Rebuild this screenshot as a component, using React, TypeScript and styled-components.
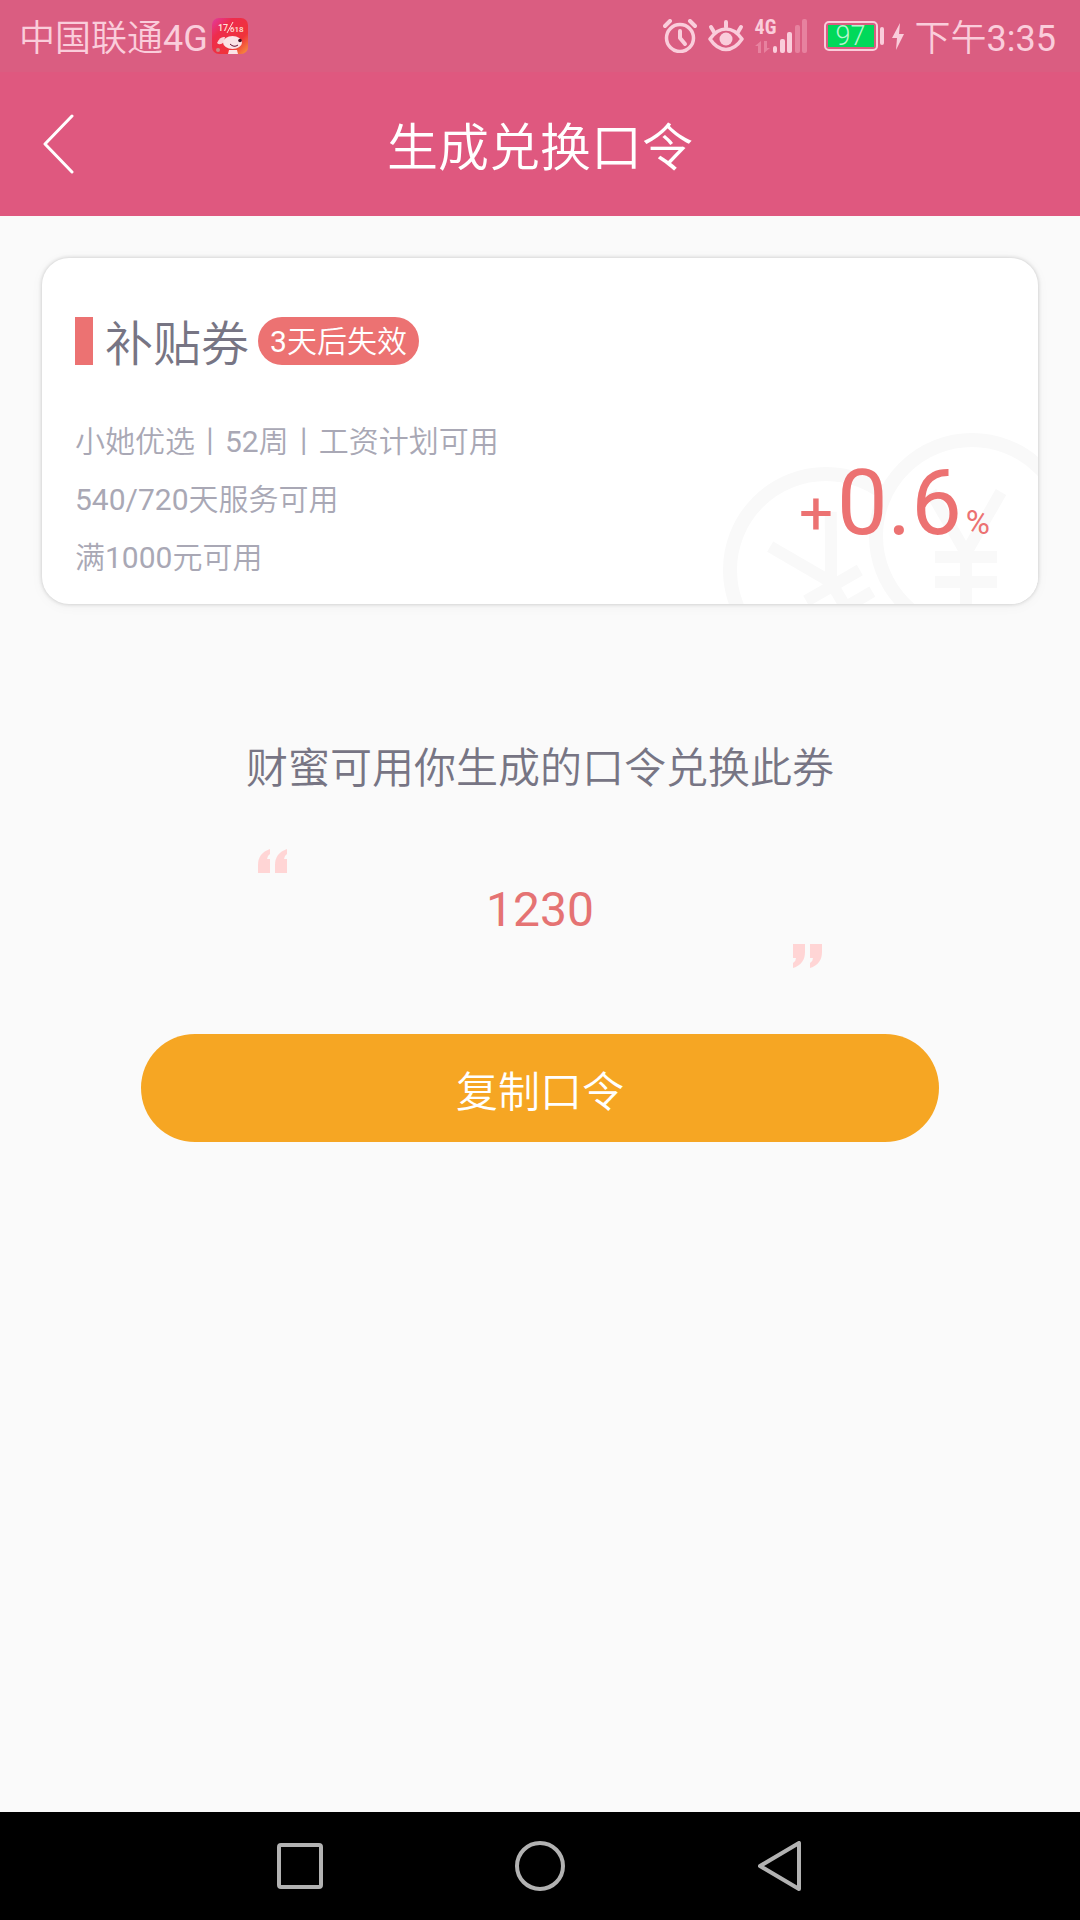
import React from "react";
import styled, { createGlobalStyle } from "styled-components";

const color = {
  statusBar: "#da5d81",
  header: "#df587f",
  statusInk: "#facddb",
  statusDim: "#e7829f",
  coral: "#ec7272",
  title: "#777584",
  detail: "#a9a8b5",
  page: "#fafafa",
  amber: "#f6a623",
  nav: "#b2b2b2",
};

const GlobalStyle = createGlobalStyle`
  *, *::before, *::after { box-sizing: border-box; }
  body {
    margin: 0;
    background: ${color.page};
    font-family: Roboto, "Noto Sans CJK SC", sans-serif;
    font-weight: 350;
  }
  button { font: inherit; border: 0; padding: 0; background: none; cursor: pointer; }
  h1, h2, p, ul { margin: 0; padding: 0; font-weight: inherit; }
  svg { display: block; }
`;

const Screen = styled.div`
  display: flex;
  flex-direction: column;
  min-height: 100vh;
`;

const Latin = styled.span`
  font-weight: 400;
`;

const StatusBar = styled.div`
  display: flex;
  align-items: center;
  justify-content: space-between;
  height: 72px;
  padding: 0 24px 0 19px;
  background: ${color.statusBar};
  color: ${color.statusInk};
  font-size: 36px;
  line-height: 48px;
`;

const StatusGroup = styled.div<{ $gap: number }>`
  display: flex;
  align-items: center;
  gap: ${(p) => p.$gap}px;
`;

const StatusText = styled.span`
  padding-top: 6px;
  white-space: nowrap;
`;

const Signal = styled.div`
  display: grid;
  grid-template-columns: 18px 34px;
  height: 34px;
`;

const SignalKind = styled.div`
  display: flex;
  flex-direction: column;
  justify-content: space-between;
  font: 700 20px/16px "Liberation Sans Narrow", "Roboto Condensed", Roboto, sans-serif;
`;

const Power = styled.div`
  display: flex;
  align-items: center;
  gap: 8px;
  margin-left: 6px;
`;

const Battery = styled.div`
  display: flex;
  align-items: center;
  gap: 2px;
`;

const BatteryCase = styled.div`
  width: 54px;
  height: 30px;
  padding: 2px;
  border: 2px solid ${color.statusInk};
  border-radius: 5px;
`;

const BatteryLevel = styled.div`
  height: 100%;
  background: #00d95a;
  color: #b9f5cf;
  font-size: 27px;
  line-height: 22px;
  text-align: center;
`;

const BatteryTip = styled.div`
  width: 4px;
  height: 18px;
  border-radius: 2px;
  background: ${color.statusInk};
`;

const Header = styled.header`
  display: grid;
  grid-template-columns: 118px 1fr 118px;
  align-items: center;
  height: 144px;
  background: ${color.header};
  color: #fff;
`;

const BackButton = styled.button`
  display: flex;
  align-items: center;
  height: 100%;
  padding-left: 42px;
`;

const HeaderTitle = styled.h1`
  padding-top: 10px;
  font-size: 51px;
  line-height: 72px;
  text-align: center;
`;

const Main = styled.main`
  flex: 1;
  display: flex;
  flex-direction: column;
  align-items: center;
  padding: 42px 42px 60px;
`;

const Card = styled.section`
  position: relative;
  align-self: stretch;
  display: flex;
  justify-content: space-between;
  align-items: flex-end;
  padding: 59px 48px 17px 33px;
  border-radius: 27px;
  background: #fff;
  box-shadow: 0 0 4px rgba(0, 0, 0, 0.2), 0 2px 14px rgba(0, 0, 0, 0.04);
  overflow: hidden;
`;

const Coins = styled.svg`
  position: absolute;
  right: 0;
  bottom: 0;
`;

const CardInfo = styled.div`
  position: relative;
`;

const CardHead = styled.div`
  display: flex;
  align-items: flex-start;
  margin-bottom: 40px;
`;

const Marker = styled.span`
  width: 18px;
  height: 48px;
  margin-right: 12px;
  background: ${color.coral};
`;

const CardTitle = styled.h2`
  font-size: 48px;
  line-height: 56px;
  color: ${color.title};
`;

const Badge = styled.span`
  height: 48px;
  margin-left: 9px;
  padding: 0 12px;
  border-radius: 24px;
  background: ${color.coral};
  color: #fff;
  font-size: 30px;
  line-height: 50px;
`;

const Details = styled.ul`
  list-style: none;
  color: ${color.detail};
  font-size: 30px;
  line-height: 58px;
  white-space: nowrap;
`;

const Rate = styled.p`
  position: relative;
  display: flex;
  align-items: baseline;
  gap: 4px;
  padding-bottom: 19px;
  color: ${color.coral};
  line-height: 90px;
  font-weight: 400;
`;

const RatePart = styled.span<{ $size: number }>`
  font-size: ${(p) => p.$size}px;
`;

const Message = styled.p`
  margin-top: 135px;
  font-size: 42px;
  line-height: 60px;
  color: ${color.title};
`;

const CodeBox = styled.div`
  display: flex;
  flex-direction: column;
  align-items: center;
  width: 564px;
  max-width: 100%;
  margin-top: 50px;
  color: #ffd5d5;
`;

const QuoteMark = styled.svg<{ $side: "start" | "end" }>`
  align-self: flex-${(p) => p.$side};
`;

const Code = styled.p`
  padding: 9px 0 6px;
  color: #e57373;
  font-size: 48px;
  line-height: 56px;
  font-weight: 400;
`;

const CopyButton = styled.button`
  width: 798px;
  max-width: 100%;
  height: 108px;
  margin-top: 66px;
  border-radius: 54px;
  background: ${color.amber};
  color: #fff;
  font-size: 42px;
`;

const NavBar = styled.nav`
  display: flex;
  height: 108px;
  padding: 0 calc(100% / 6);
  background: #000;
`;

const NavButton = styled.button`
  flex: 1;
  display: flex;
  align-items: center;
  justify-content: center;
`;

/* Sets digits and Latin letters in the regular weight beside the lighter Chinese glyphs. */
const Mixed = ({ text }: { text: string }) => (
  <>
    {text.split(/([\dA-Z/:]+)/).map((part, i) => (i % 2 ? <Latin key={i}>{part}</Latin> : part))}
  </>
);

const AppBadge = () => (
  <svg width="36" height="36" viewBox="0 0 36 36" aria-hidden="true">
    <defs>
      <linearGradient id="badge" x1="0" y1="0" x2="1" y2="1">
        <stop offset="0" stopColor="#e23aa0" />
        <stop offset="0.3" stopColor="#ee2c4c" />
        <stop offset="0.7" stopColor="#f0333a" />
        <stop offset="1" stopColor="#f79a3c" />
      </linearGradient>
    </defs>
    <rect width="36" height="36" rx="7" fill="url(#badge)" />
    <text x="6" y="13" fontSize="9" fontWeight="500" fill="#ffe3d8">17</text>
    <text x="18" y="14" fontSize="8" fontWeight="500" fill="#ffe3d8">618</text>
    <path d="M21 4 L15 15" stroke="#ffe3d8" strokeWidth="1" />
    <path d="M13 19 Q8 18 5 25 Q8 28 12 24 Z" fill="#f9d3d8" />
    <ellipse cx="20.500" cy="24.500" rx="9.500" ry="6.500" fill="#fbe3e6" />
    <path d="M17 32 h8 l1 4 h-10 Z" fill="#fbe3e6" />
    <circle cx="28" cy="22.500" r="1.800" fill="#412" />
    <path d="M18 26 q4 4 8 1" fill="none" stroke="#613" strokeWidth="1" />
    <circle cx="6" cy="32" r="2" fill="#c88" />
  </svg>
);

const AlarmIcon = () => (
  <svg width="34" height="34" viewBox="0 0 34 34" fill="none" stroke="currentColor" strokeLinecap="round" aria-hidden="true">
    <circle cx="17" cy="19" r="13.500" strokeWidth="3.500" />
    <path d="M2 7 L7 2 M32 7 L27 2" strokeWidth="4" />
    <path d="M17 12 V19 L22 25" strokeWidth="4" strokeLinejoin="round" />
  </svg>
);

const EyeIcon = () => (
  <svg width="36" height="32" viewBox="0 0 36 32" fill="none" stroke="currentColor" strokeLinecap="round" aria-hidden="true">
    <path d="M2 19 Q9 9 18 9 Q27 9 34 19 Q27 29.500 18 29.500 Q9 29.500 2 19 Z" strokeWidth="3.500" strokeLinejoin="round" />
    <circle cx="18" cy="19" r="6.500" fill="currentColor" stroke="none" />
    <path d="M18 2 V7 M3 7 L6 12 M33 7 L30 12" strokeWidth="4" />
  </svg>
);

const TransferArrows = () => (
  <svg width="15" height="12" viewBox="0 0 15 12" fill={color.statusDim} aria-hidden="true">
    <path d="M0 5 L6 0 V12 H3 V5 Z M9 0 H12 V7 H15 L9 12 Z" />
  </svg>
);

const SignalBars = () => (
  <svg width="34" height="34" viewBox="0 0 34 34" fill="currentColor" aria-hidden="true">
    <rect x="0" y="27" width="4" height="7" rx="2" />
    <rect x="7" y="20" width="5" height="14" rx="2" />
    <rect x="14" y="13" width="5" height="21" rx="2" />
    <rect x="22" y="6" width="5" height="28" rx="2" fill={color.statusDim} />
    <rect x="29" y="0" width="5" height="34" rx="2" fill={color.statusDim} />
  </svg>
);

const BoltIcon = () => (
  <svg width="12" height="27" viewBox="0 0 12 27" fill="currentColor" aria-hidden="true">
    <path d="M8 0 L0 15 H5 L4 27 L12 11 H7 Z" />
  </svg>
);

const yenPath = "M-35 -61 L0 0 L35 -61 M0 0 V60 M-31 4 H31 M-31 29 H31";

const CoinArt = () => (
  <Coins width="320" height="176" viewBox="0 0 320 176" fill="none" stroke="#f9f9f9" strokeWidth="14" aria-hidden="true">
    <circle cx="108" cy="142" r="96" />
    <path d={yenPath} strokeWidth="12" transform="translate(113 154) rotate(-30)" />
    <circle cx="254" cy="108" r="96" fill="#fff" />
    <path d={yenPath} strokeWidth="12" transform="translate(248 125)" />
  </Coins>
);

const quotePath =
  "M12 0 Q0 4 0 16 V24 H12 V10 H9 Q9 7 12 5 Z M29 0 Q17 4 17 16 V24 H29 V10 H26 Q26 7 29 5 Z";

const details = ["小她优选丨52周丨工资计划可用", "540/720天服务可用", "满1000元可用"];

export default function App() {
  return (
    <Screen lang="zh-CN">
      <GlobalStyle />
      <StatusBar>
        <StatusGroup $gap={4}>
          <StatusText>
            <Mixed text="中国联通4G" />
          </StatusText>
          <AppBadge />
        </StatusGroup>
        <StatusGroup $gap={11}>
          <AlarmIcon />
          <EyeIcon />
          <Signal>
            <SignalKind>
              4G
              <TransferArrows />
            </SignalKind>
            <SignalBars />
          </Signal>
          <Power>
            <Battery>
              <BatteryCase>
                <BatteryLevel>97</BatteryLevel>
              </BatteryCase>
              <BatteryTip />
            </Battery>
            <BoltIcon />
          </Power>
          <StatusText>
            <Mixed text="下午3:35" />
          </StatusText>
        </StatusGroup>
      </StatusBar>

      <Header>
        <BackButton aria-label="返回">
          <svg width="32" height="60" viewBox="0 0 32 60" fill="none" stroke="#fff" strokeWidth="3" strokeLinecap="round" strokeLinejoin="round">
            <path d="M30 2 L3 30 L30 58" />
          </svg>
        </BackButton>
        <HeaderTitle>生成兑换口令</HeaderTitle>
      </Header>

      <Main>
        <Card>
          <CoinArt />
          <CardInfo>
            <CardHead>
              <Marker />
              <CardTitle>补贴券</CardTitle>
              <Badge>
                <Mixed text="3天后失效" />
              </Badge>
            </CardHead>
            <Details>
              {details.map((line) => (
                <li key={line}>
                  <Mixed text={line} />
                </li>
              ))}
            </Details>
          </CardInfo>
          <Rate>
            <RatePart $size={60}>+</RatePart>
            <RatePart $size={90}>0.6</RatePart>
            <RatePart $size={33}>%</RatePart>
          </Rate>
        </Card>

        <Message>财蜜可用你生成的口令兑换此券</Message>

        <CodeBox>
          <QuoteMark $side="start" width="29" height="24" viewBox="0 0 29 24" fill="currentColor" aria-hidden="true">
            <path d={quotePath} />
          </QuoteMark>
          <Code>1230</Code>
          <QuoteMark $side="end" width="29" height="24" viewBox="0 0 29 24" fill="currentColor" aria-hidden="true">
            <path d={quotePath} transform="rotate(180 14.500 12)" />
          </QuoteMark>
        </CodeBox>

        <CopyButton>复制口令</CopyButton>
      </Main>

      <NavBar>
        <NavButton aria-label="最近任务">
          <svg width="46" height="46" viewBox="0 0 46 46" fill="none" stroke={color.nav} strokeWidth="4">
            <rect x="2" y="2" width="42" height="42" rx="2" />
          </svg>
        </NavButton>
        <NavButton aria-label="主屏幕">
          <svg width="50" height="50" viewBox="0 0 50 50" fill="none" stroke={color.nav} strokeWidth="4">
            <circle cx="25" cy="25" r="23" />
          </svg>
        </NavButton>
        <NavButton aria-label="返回上一页">
          <svg width="44" height="50" viewBox="0 0 44 50" fill="none" stroke={color.nav} strokeWidth="4" strokeLinejoin="round">
            <path d="M2 25 L41 2 V48 Z" />
          </svg>
        </NavButton>
      </NavBar>
    </Screen>
  );
}
